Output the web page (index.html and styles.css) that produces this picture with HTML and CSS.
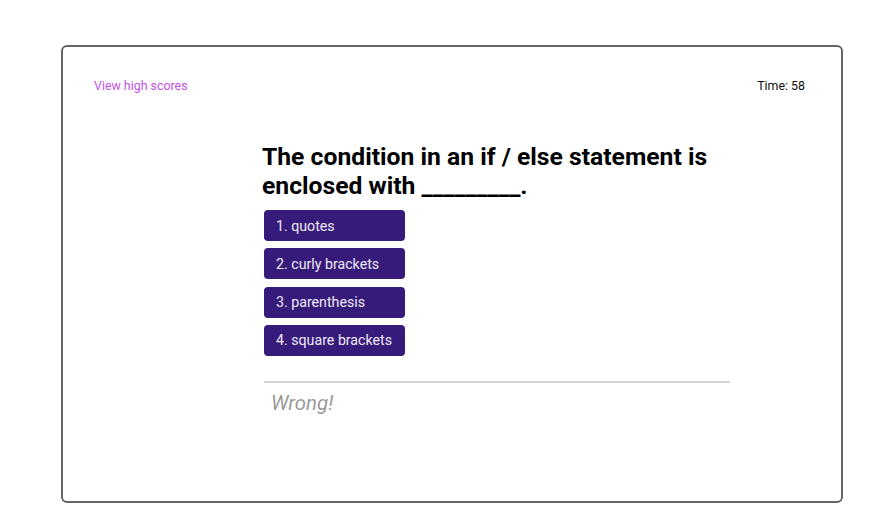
FILE: index.html
```html
<!DOCTYPE html>
<html>
<head>
<meta charset="utf-8">
<link rel="stylesheet" href="styles.css">
</head>
<body>
<div class="frame">
  <header class="top">
    <a class="scores" href="#">View high scores</a>
    <span class="timer">Time: 58</span>
  </header>
  <main class="quiz">
    <h1 class="question">The condition in an if / else statement is enclosed with _________.</h1>
    <div class="choices">
      <button class="choice">1. quotes</button>
      <button class="choice">2. curly brackets</button>
      <button class="choice">3. parenthesis</button>
      <button class="choice">4. square brackets</button>
    </div>
    <div class="result">Wrong!</div>
  </main>
</div>
</body>
</html>
```
FILE: styles.css
```css
* { box-sizing: border-box; }
html, body { margin: 0; padding: 0; background: #fff; }
body { font-family: Roboto, "Liberation Sans", sans-serif; }
.frame {
  margin: 45px 40px 0 61px;
  height: 458px;
  border: 2px solid #666;
  border-radius: 6px;
  display: flex;
  flex-direction: column;
}
.top {
  display: flex;
  justify-content: space-between;
  align-items: center;
  padding: 32px 36px 0 31px;
  font-size: 12.4px;
  line-height: 14px;
}
.scores { color: #c152e6; text-decoration: none; }
.timer { color: #111; }
.quiz {
  margin: 49px 0 0 201px;
  width: 466px;
}
.question {
  margin: 0 0 10px -2px;
  font-size: 24.7px;
  line-height: 29px;
  font-weight: 700;
  color: #000;
}
.choices {
  display: flex;
  flex-direction: column;
  align-items: flex-start;
  gap: 7.3px;
}
.choice {
  width: 141px;
  height: 31px;
  border: none;
  border-radius: 4px;
  background: #371b7b;
  color: #efeaf7;
  font-family: Roboto, "Liberation Sans", sans-serif;
  font-size: 14.2px;
  text-align: left;
  padding: 0 0 0 12px;
}
.result {
  margin-top: 25px;
  border-top: 2px solid #d3d3d3;
  padding: 8px 0 0 7px;
  font-size: 20.4px;
  line-height: 24px;
  font-style: italic;
  color: #9a9a9a;
}
```
